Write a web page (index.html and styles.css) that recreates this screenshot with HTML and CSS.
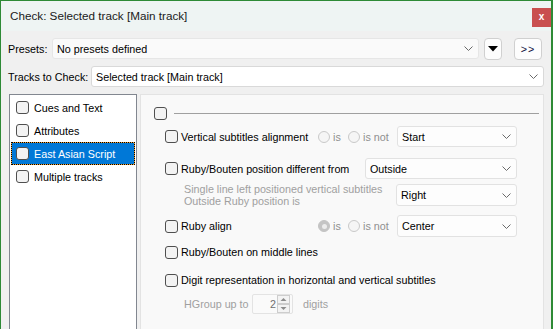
FILE: index.html
```html
<!DOCTYPE html>
<html>
<head>
<meta charset="utf-8">
<title>Check</title>
<link rel="stylesheet" href="styles.css">
</head>
<body>
<div class="window">
  <div class="titlebar">
    <span class="title">Check: Selected track [Main track]</span>
    <span class="close">x</span>
  </div>
  <div class="content">
    <div class="bar presets">
      <span class="lbl lbl-presets">Presets:</span>
      <div class="combo combo-presets"><span>No presets defined</span><svg class="chev" width="9" height="5" viewBox="0 0 9 5"><path d="M0.5 0.5 L4.5 4.5 L8.5 0.5" fill="none" stroke="#6a6a6a"/></svg></div>
      <div class="btn btn-drop"><svg width="10" height="6" viewBox="0 0 10 6"><polygon points="0,0 10,0 5,5.5" fill="#000"/></svg></div>
      <div class="btn btn-more">&gt;&gt;</div>
    </div>
    <div class="bar tracks">
      <span class="lbl lbl-tracks">Tracks to Check:</span>
      <div class="combo combo-tracks"><span>Selected track [Main track]</span><svg class="chev" width="9" height="5" viewBox="0 0 9 5"><path d="M0.5 0.5 L4.5 4.5 L8.5 0.5" fill="none" stroke="#6a6a6a"/></svg></div>
    </div>
    <div class="main">
      <ul class="list">
        <li class="item"><span class="cb"></span>Cues and Text</li>
        <li class="item"><span class="cb"></span>Attributes</li>
        <li class="item selected"><span class="cb"></span>East Asian Script</li>
        <li class="item"><span class="cb"></span>Multiple tracks</li>
      </ul>
      <div class="panel">
        <div class="head"><span class="cb"></span><span class="rule"></span></div>

        <div class="opt r-vert">
          <span class="chk"><span class="cb"></span>Vertical subtitles alignment</span>
          <span class="radio radio-is"><span class="rb"></span>is</span>
          <span class="radio radio-isnot"><span class="rb"></span>is not</span>
          <div class="combo combo-std"><span>Start</span><svg class="chev" width="9" height="5" viewBox="0 0 9 5"><path d="M0.5 0.5 L4.5 4.5 L8.5 0.5" fill="none" stroke="#6a6a6a"/></svg></div>
        </div>

        <div class="opt r-pos">
          <span class="chk"><span class="cb"></span>Ruby/Bouten position different from</span>
          <div class="combo combo-wide"><span>Outside</span><svg class="chev" width="9" height="5" viewBox="0 0 9 5"><path d="M0.5 0.5 L4.5 4.5 L8.5 0.5" fill="none" stroke="#6a6a6a"/></svg></div>
        </div>

        <div class="opt r-sub">
          <span class="note">Single line left positioned vertical subtitles<br>Outside Ruby position is</span>
          <div class="combo combo-right"><span>Right</span><svg class="chev" width="9" height="5" viewBox="0 0 9 5"><path d="M0.5 0.5 L4.5 4.5 L8.5 0.5" fill="none" stroke="#6a6a6a"/></svg></div>
        </div>

        <div class="opt r-align">
          <span class="chk"><span class="cb"></span>Ruby align</span>
          <span class="radio radio-is"><span class="rb on"></span>is</span>
          <span class="radio radio-isnot"><span class="rb"></span>is not</span>
          <div class="combo combo-std"><span>Center</span><svg class="chev" width="9" height="5" viewBox="0 0 9 5"><path d="M0.5 0.5 L4.5 4.5 L8.5 0.5" fill="none" stroke="#6a6a6a"/></svg></div>
        </div>

        <div class="opt r-middle">
          <span class="chk"><span class="cb"></span>Ruby/Bouten on middle lines</span>
        </div>

        <div class="opt r-digit">
          <span class="chk"><span class="cb"></span>Digit representation in horizontal and vertical subtitles</span>
        </div>

        <div class="opt r-hgroup">
          <span class="hg-label">HGroup up to</span>
          <div class="spin">
            <span class="spin-val">2</span>
            <svg class="spin-btns" width="13" height="18" viewBox="0 0 13 18"><rect x="0.5" y="0.5" width="12" height="8" fill="#f3f3f3" stroke="#cdcdcd"/><rect x="0.5" y="9.5" width="12" height="8" fill="#f3f3f3" stroke="#cdcdcd"/><path d="M3.5 6 L6.5 3 L9.5 6 Z" fill="#8c8c8c"/><path d="M3.5 12 L6.5 15 L9.5 12 Z" fill="#8c8c8c"/></svg>
          </div>
          <span class="digits">digits</span>
        </div>
      </div>
    </div>
  </div>
</div>
</body>
</html>
```

FILE: styles.css
```css
* { box-sizing: border-box; }

html, body {
  margin: 0;
  padding: 0;
}

body {
  width: 553px;
  height: 329px;
  overflow: hidden;
  background: #f0f0f0;
  font-family: "Liberation Sans", Arial, sans-serif;
  font-size: 10.75px;
  color: #000;
}

.window {
  width: 553px;
  height: 329px;
  border-style: solid;
  border-color: #2e8a36;
  border-width: 1px 2px 0 1px;
  display: flex;
  flex-direction: column;
  overflow: hidden;
  background: #f0f0f0;
}

.titlebar {
  height: 30px;
  flex: none;
  background: #eef4f3;
  display: flex;
  align-items: flex-start;
  padding-left: 9px;
}

.title {
  line-height: 30px;
  font-size: 11.7px;
  color: #1a1a1a;
}

.close {
  margin-left: auto;
  margin-top: 7px;
  width: 19px;
  height: 19px;
  background: #c94f4f;
  color: #fff;
  font-weight: bold;
  font-size: 10px;
  line-height: 18px;
  text-align: center;
}

.content {
  flex: 1;
  min-height: 0;
  display: flex;
  flex-direction: column;
  padding: 7px 7px 0 7px;
}

.bar {
  display: flex;
  align-items: center;
  height: 21px;
  flex: none;
}

.tracks { margin-top: 7px; }

.presets { padding-right: 2px; }

.lbl { flex: none; white-space: nowrap; }
.lbl-presets { width: 44px; }
.lbl-tracks { width: 83px; }

.combo {
  height: 21px;
  display: flex;
  align-items: center;
  justify-content: space-between;
  padding: 0 5px 0 4px;
  background: #fdfdfd;
  border: 1px solid #e2e2e2;
  border-radius: 3px;
  white-space: nowrap;
  flex: none;
}

.combo-presets {
  flex: 1;
  background: #fafafa;
  border-color: #e6e6e6;
}

.combo-tracks {
  flex: 1;
  background: #fff;
  border-color: #d9d9d9;
}

.chev { flex: none; }

.btn {
  height: 22px;
  display: flex;
  align-items: center;
  justify-content: center;
  background: #fdfdfd;
  border: 1px solid #d0d0d0;
  border-radius: 4px;
  flex: none;
}

.btn-drop {
  width: 18px;
  margin-left: 5px;
}

.btn-more {
  width: 28px;
  margin-left: 12px;
  color: #101040;
  letter-spacing: 1px;
}

.main {
  flex: none;
  height: 260px;
  margin-top: 7px;
  display: grid;
  grid-template-columns: 128px 1fr;
  column-gap: 3px;
  padding-left: 1px;
}

.list {
  margin: 0;
  padding: 1px;
  list-style: none;
  background: #fff;
  border: 1px solid #828790;
}

.item {
  height: 23px;
  display: flex;
  align-items: center;
  gap: 5px;
  padding-left: 5px;
  white-space: nowrap;
}

.item.selected {
  padding-left: 4px;
  color: #fff;
  border: 1px dotted #000;
  background: linear-gradient(#0078d7, #0078d7) padding-box, #f0a030 border-box;
}

.cb {
  width: 13px;
  height: 13px;
  flex: none;
  border: 1px solid #4f4f4f;
  border-radius: 3px;
  background: #f3f3f3;
}

.panel {
  background: #f9f9f9;
  border: 1px solid #e3e3e3;
  border-bottom: 0;
  display: flex;
  flex-direction: column;
  padding-top: 12px;
}

.head {
  display: flex;
  align-items: center;
  height: 13px;
  margin-left: 13px;
}

.rule {
  flex: 1;
  height: 1px;
  background: #a0a0a0;
  margin: 0 4px 0 7px;
}

.opt {
  display: flex;
  align-items: center;
  margin-left: 24px;
  width: 352px;
  height: 21px;
  flex: none;
  white-space: nowrap;
}

.r-vert { margin-top: 6px; }
.r-pos { margin-top: 11px; }
.r-sub { margin-top: 5px; height: 22px; }
.r-align { margin-top: 9px; height: 22px; }
.r-middle { margin-top: 4px; height: 22px; }
.r-digit { margin-top: 6px; height: 22px; }
.r-hgroup { margin-top: 3px; height: 20px; padding-left: 19px; color: #a0a0a0; }

.chk {
  flex: 1;
  display: flex;
  align-items: center;
  gap: 3px;
}

.radio {
  display: flex;
  align-items: center;
  gap: 3px;
  color: #8f8f8f;
  flex: none;
}

.radio-is { width: 30px; }
.radio-isnot { width: 49px; }

.rb {
  width: 12px;
  height: 12px;
  border-radius: 50%;
  border: 1px solid #c9c9c9;
  background: #f5f5f5;
  display: flex;
  align-items: center;
  justify-content: center;
}

.rb.on {
  background: #c4c4c4;
  border-color: #c4c4c4;
}

.rb.on::after {
  content: "";
  width: 5px;
  height: 5px;
  border-radius: 50%;
  background: #ececec;
}

.combo-std { width: 120px; }
.combo-wide { width: 152px; }
.combo-right { width: 121px; height: 22px; }
.r-align .combo { height: 22px; }

.note {
  flex: 1;
  padding-left: 19px;
  line-height: 12px;
  color: #a0a0a0;
}

.hg-label { width: 68px; flex: none; }

.spin {
  width: 41px;
  height: 20px;
  flex: none;
  display: flex;
  align-items: center;
  border: 1px solid #e3e3e3;
  border-radius: 2px;
  background: #fafafa;
  padding-right: 2px;
}

.spin-val {
  flex: 1;
  text-align: right;
  padding-right: 1px;
  color: #707070;
}

.spin-btns { flex: none; }

.digits { margin-left: 10px; }
```
